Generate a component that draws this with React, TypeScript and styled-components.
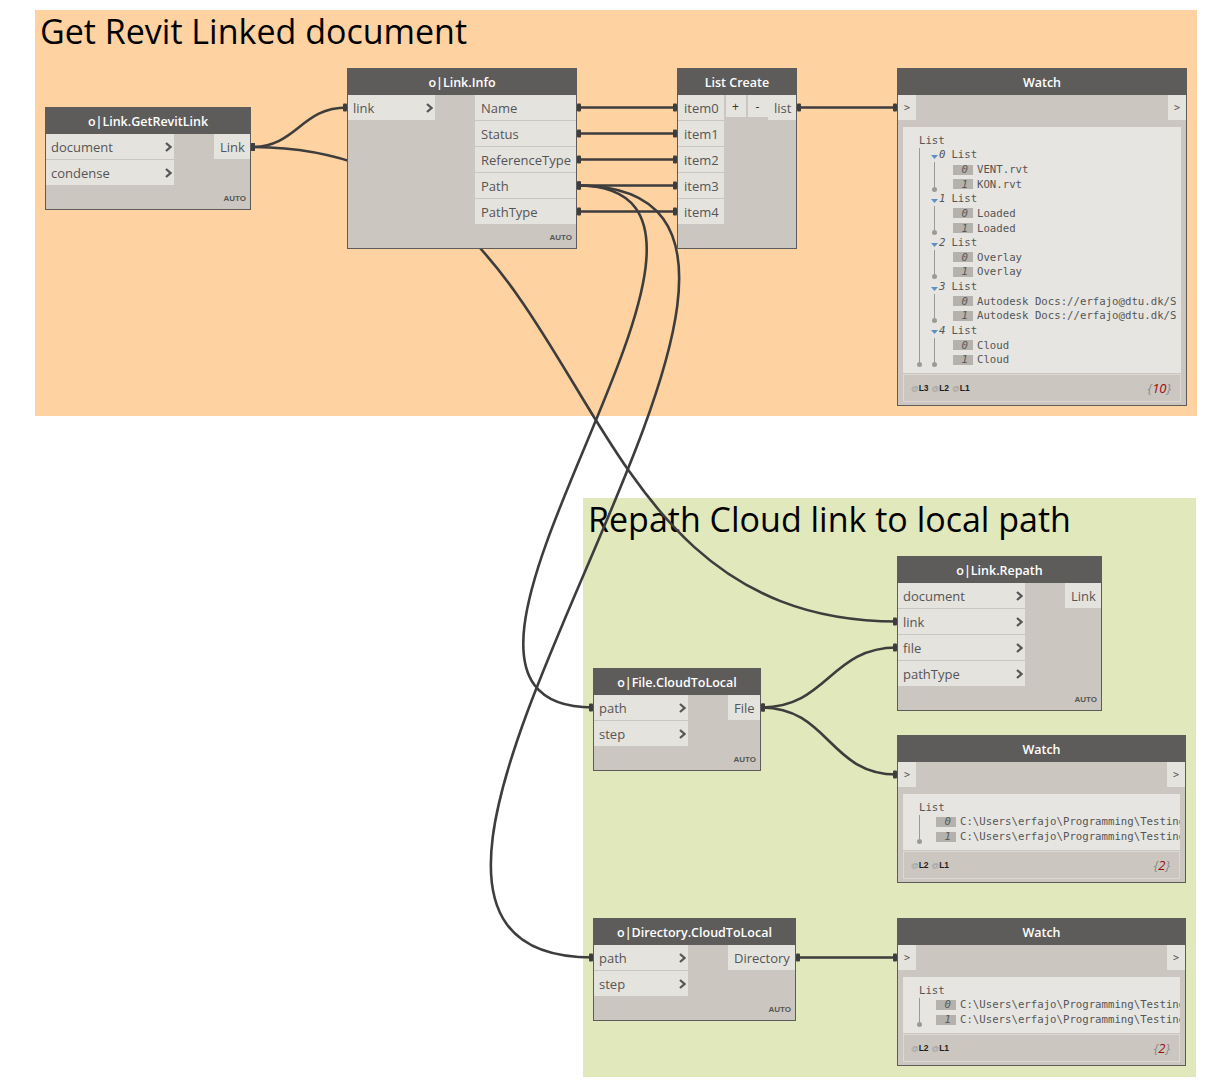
import React from "react";
import styled, { createGlobalStyle } from "styled-components";

const GlobalStyle = createGlobalStyle`
  html, body { margin: 0; padding: 0; background: #ffffff; }
  body { font-family: "Open Sans", "Noto Sans", sans-serif; }
  * { box-sizing: border-box; }
`;

const Canvas = styled.div`
  position: relative;
  width: 1226px;
  height: 1091px;
  overflow: hidden;
  background: #ffffff;
`;

const Group = styled.div<{ $x: number; $y: number; $w: number; $h: number; $bg: string }>`
  position: absolute;
  left: ${p => p.$x}px;
  top: ${p => p.$y}px;
  width: ${p => p.$w}px;
  height: ${p => p.$h}px;
  background: ${p => p.$bg};
  padding: 0 0 0 5px;
  z-index: 0;
`;

const GroupTitle = styled.div`
  font-family: "Open Sans", "Noto Sans", sans-serif;
  font-size: 34px;
  line-height: 42px;
  color: #000;
  white-space: nowrap;
`;

const Wires = styled.svg`
  position: absolute;
  left: 0;
  top: 0;
  z-index: 1;
  pointer-events: none;
`;

const NodeBox = styled.div<{ $x: number; $y: number; $w: number }>`
  position: absolute;
  left: ${p => p.$x}px;
  top: ${p => p.$y}px;
  width: ${p => p.$w}px;
  z-index: 2;
  display: flex;
  flex-direction: column;
  background: #cbc7c0;
  border: 1px solid #5e5c5a;
`;

const NodeHeader = styled.div`
  height: 26px;
  background: #5e5c5a;
  color: #ffffff;
  font-family: "Open Sans", sans-serif;
  font-weight: 600;
  font-size: 12.5px;
  display: flex;
  align-items: center;
  justify-content: center;
  white-space: nowrap;
`;

const NodeBody = styled.div`
  display: flex;
  justify-content: space-between;
  align-items: flex-start;
`;

const PortColumn = styled.div<{ $w: number }>`
  width: ${p => p.$w}px;
  display: flex;
  flex-direction: column;
  gap: 1px;
`;

const InPort = styled.div`
  height: 25px;
  background: #e5e3de;
  display: flex;
  align-items: center;
  justify-content: space-between;
  padding: 0 2px 0 5px;
  font-size: 13px;
  color: #555;
  white-space: nowrap;
`;

const OutPort = styled.div`
  height: 25px;
  background: #e5e3de;
  display: flex;
  align-items: center;
  padding: 0 5px 0 6px;
  font-size: 13px;
  color: #555;
  white-space: nowrap;
`;

const NodeFooter = styled.div`
  height: 24px;
  display: flex;
  justify-content: flex-end;
  align-items: flex-end;
  padding: 0 4px 5px 0;
  font-family: "Liberation Sans", Arial, sans-serif;
  font-weight: 700;
  font-size: 8px;
  line-height: 10px;
  color: #555;
`;

const ListButtons = styled.div`
  display: flex;
  gap: 2px;
  margin-left: 1px;
`;

const ListButton = styled.div`
  width: 20px;
  height: 22px;
  background: #e5e3de;
  display: flex;
  align-items: center;
  justify-content: center;
  font-size: 12px;
  color: #333;
`;

const WatchPorts = styled.div`
  display: flex;
  justify-content: space-between;
`;

const WatchPort = styled.div`
  width: 18px;
  height: 25px;
  background: #e5e3de;
  display: flex;
  align-items: center;
  justify-content: center;
  font-family: "DejaVu Sans Mono", monospace;
  font-size: 10px;
  color: #555;
`;

const WatchPanel = styled.div<{ $h: number }>`
  height: ${p => p.$h}px;
  margin: 7px 5px 0;
  background: #e6e5e1;
  overflow: hidden;
  padding: 6px 0 0 13px;
  font-family: "DejaVu Sans Mono", "Liberation Mono", monospace;
  font-size: 10.7px;
  color: #555;
`;

const WatchFooter = styled.div`
  height: 28px;
  margin: 1px 5px 3px;
  border: 1px solid #dcd9d3;
  display: flex;
  align-items: center;
  justify-content: space-between;
  padding: 0 7px 0 7px;
`;

const Levels = styled.div`
  display: flex;
  gap: 3px;
  font-family: "Liberation Sans", Arial, sans-serif;
  font-size: 8.5px;
  font-weight: 700;
  color: #1e1e1e;
`;

const At = styled.span`
  color: #9d9b97;
  font-weight: 400;
  font-size: 7.5px;
`;

const Count = styled.div`
  font-family: "Open Sans", sans-serif;
  font-style: italic;
  font-size: 13px;
  color: #8a8a8a;
  margin-right: 2px;
`;

const CountNum = styled.span`
  color: #9b0b0b;
`;

const TreeLine = styled.div`
  height: 14.64px;
  display: flex;
  align-items: center;
  white-space: nowrap;
`;

const RootLabel = styled.span`
  margin-left: 3px;
`;

const Branch = styled.div`
  display: flex;
`;

const Rail = styled.div`
  width: 7px;
  flex-shrink: 0;
  display: flex;
  flex-direction: column;
  align-items: center;
  &::before {
    content: "";
    flex: 1;
    width: 1px;
    background: #9c9a96;
  }
  &::after {
    content: "";
    width: 5px;
    height: 5px;
    border-radius: 50%;
    background: #9c9a96;
  }
`;

const BranchItems = styled.div<{ $indent: number }>`
  margin-left: ${p => p.$indent}px;
  display: flex;
  flex-direction: column;
`;

const Badge = styled.span`
  width: 20px;
  height: 10px;
  background: #b5b2ad;
  color: #5a5a5a;
  font-style: italic;
  display: flex;
  align-items: center;
  justify-content: flex-end;
  padding-right: 5px;
  margin-right: 4px;
  flex-shrink: 0;
`;

const Index = styled.span`
  font-style: italic;
  margin: 0 6px 0 1px;
`;

const Chevron = () => (
  <svg width="7" height="10" viewBox="0 0 7 10">
    <polyline points="1,1 5.5,5 1,9" fill="none" stroke="#555" strokeWidth="2.2" />
  </svg>
);

const Caret = () => (
  <svg width="7" height="8" viewBox="0 0 7 8" style={{ marginTop: 4 }}>
    <polygon points="0,2 7,2 3.5,6" fill="#5d8fc4" />
  </svg>
);

type FnProps = {
  name: string;
  x: number;
  y: number;
  w: number;
  inputs: string[];
  inW: number;
  outputs: string[];
  outW: number;
};

const FunctionNode = ({ name, x, y, w, inputs, inW, outputs, outW }: FnProps) => (
  <NodeBox $x={x} $y={y} $w={w}>
    <NodeHeader>{name}</NodeHeader>
    <NodeBody>
      <PortColumn $w={inW}>
        {inputs.map(i => (
          <InPort key={i}>
            {i}
            <Chevron />
          </InPort>
        ))}
      </PortColumn>
      <PortColumn $w={outW}>
        {outputs.map(o => (
          <OutPort key={o}>{o}</OutPort>
        ))}
      </PortColumn>
    </NodeBody>
    <NodeFooter>AUTO</NodeFooter>
  </NodeBox>
);

type WatchProps = {
  x: number;
  y: number;
  w: number;
  panelH: number;
  levels: string[];
  count: number;
  children: React.ReactNode;
};

const WatchNode = ({ x, y, w, panelH, levels, count, children }: WatchProps) => (
  <NodeBox $x={x} $y={y} $w={w}>
    <NodeHeader>Watch</NodeHeader>
    <WatchPorts>
      <WatchPort>&gt;</WatchPort>
      <WatchPort>&gt;</WatchPort>
    </WatchPorts>
    <WatchPanel $h={panelH}>{children}</WatchPanel>
    <WatchFooter>
      <Levels>
        {levels.map(l => (
          <span key={l}>
            <At>@</At>
            {l}
          </span>
        ))}
      </Levels>
      <Count>
        {"{"}
        <CountNum>{count}</CountNum>
        {"}"}
      </Count>
    </WatchFooter>
  </NodeBox>
);

const Items = ({ values }: { values: string[] }) => (
  <>
    {values.map((v, i) => (
      <TreeLine key={i}>
        <Badge>{i}</Badge>
        {v}
      </TreeLine>
    ))}
  </>
);

const linkInfo = [
  ["VENT.rvt", "KON.rvt"],
  ["Loaded", "Loaded"],
  ["Overlay", "Overlay"],
  ["Autodesk Docs://erfajo@dtu.dk/S", "Autodesk Docs://erfajo@dtu.dk/S"],
  ["Cloud", "Cloud"],
];

const localPaths = [
  "C:\\Users\\erfajo\\Programming\\Testing",
  "C:\\Users\\erfajo\\Programming\\Testing",
];

const wire = (x1: number, y1: number, x2: number, y2: number) => {
  const d = Math.hypot(x2 - x1, y2 - y1) * 0.45;
  return `M${x1},${y1} C${x1 + d},${y1} ${x2 - d},${y2} ${x2},${y2}`;
};

const connections: [number, number, number, number][] = [
  [251, 147, 347, 107.5],
  [251, 147, 897, 621.5],
  [577, 107.5, 677, 107.5],
  [577, 133.5, 677, 133.5],
  [577, 159.5, 677, 159.5],
  [577, 185.5, 677, 185.5],
  [577, 211.5, 677, 211.5],
  [577, 185.5, 593, 707.5],
  [577, 185.5, 593, 957.5],
  [797, 107.5, 897, 107.5],
  [761, 707.5, 897, 647.5],
  [761, 707.5, 897, 774.5],
  [796, 957.5, 897, 957.5],
];

export default function App() {
  return (
    <>
      <GlobalStyle />
      <Canvas>
        <Group $x={35} $y={10} $w={1162} $h={406} $bg="#fed3a1">
          <GroupTitle>Get Revit Linked document</GroupTitle>
        </Group>
        <Group $x={583} $y={498} $w={613} $h={579} $bg="#e1e8bb">
          <GroupTitle>Repath Cloud link to local path</GroupTitle>
        </Group>

        <Wires width={1226} height={1091}>
          {connections.map(([x1, y1, x2, y2], i) => (
            <g key={i}>
              <path d={wire(x1, y1, x2, y2)} fill="none" stroke="#3d3d3d" strokeWidth={2.6} />
              <rect x={x1} y={y1 - 4} width={4} height={8} rx={1} fill="#3d3d3d" />
              <rect x={x2 - 4} y={y2 - 4} width={4} height={8} rx={1} fill="#3d3d3d" />
            </g>
          ))}
        </Wires>

        <FunctionNode
          name="o|Link.GetRevitLink"
          x={45}
          y={107}
          w={206}
          inputs={["document", "condense"]}
          inW={128}
          outputs={["Link"]}
          outW={36}
        />
        <FunctionNode
          name="o|Link.Info"
          x={347}
          y={68}
          w={230}
          inputs={["link"]}
          inW={87}
          outputs={["Name", "Status", "ReferenceType", "Path", "PathType"]}
          outW={101}
        />

        <NodeBox $x={677} $y={68} $w={120}>
          <NodeHeader>List Create</NodeHeader>
          <NodeBody>
            <PortColumn $w={46}>
              {["item0", "item1", "item2", "item3", "item4"].map(i => (
                <OutPort key={i}>{i}</OutPort>
              ))}
            </PortColumn>
            <ListButtons>
              <ListButton>+</ListButton>
              <ListButton>-</ListButton>
            </ListButtons>
            <PortColumn $w={28}>
              <OutPort>list</OutPort>
            </PortColumn>
          </NodeBody>
          <NodeFooter />
        </NodeBox>

        <WatchNode x={897} y={68} w={290} panelH={246} levels={["L3", "L2", "L1"]} count={10}>
          <TreeLine>
            <RootLabel>List</RootLabel>
          </TreeLine>
          <Branch>
            <Rail />
            <BranchItems $indent={8}>
              {linkInfo.map((values, i) => (
                <div key={i}>
                  <TreeLine>
                    <Caret />
                    <Index>{i}</Index>List
                  </TreeLine>
                  <Branch>
                    <Rail />
                    <BranchItems $indent={15}>
                      <Items values={values} />
                    </BranchItems>
                  </Branch>
                </div>
              ))}
            </BranchItems>
          </Branch>
        </WatchNode>

        <FunctionNode
          name="o|Link.Repath"
          x={897}
          y={556}
          w={205}
          inputs={["document", "link", "file", "pathType"]}
          inW={127}
          outputs={["Link"]}
          outW={36}
        />
        <FunctionNode
          name="o|File.CloudToLocal"
          x={593}
          y={668}
          w={168}
          inputs={["path", "step"]}
          inW={94}
          outputs={["File"]}
          outW={32}
        />
        <FunctionNode
          name="o|Directory.CloudToLocal"
          x={593}
          y={918}
          w={203}
          inputs={["path", "step"]}
          inW={94}
          outputs={["Directory"]}
          outW={67}
        />

        <WatchNode x={897} y={735} w={289} panelH={56} levels={["L2", "L1"]} count={2}>
          <TreeLine>
            <RootLabel>List</RootLabel>
          </TreeLine>
          <Branch>
            <Rail />
            <BranchItems $indent={13}>
              <Items values={localPaths} />
            </BranchItems>
          </Branch>
        </WatchNode>

        <WatchNode x={897} y={918} w={289} panelH={56} levels={["L2", "L1"]} count={2}>
          <TreeLine>
            <RootLabel>List</RootLabel>
          </TreeLine>
          <Branch>
            <Rail />
            <BranchItems $indent={13}>
              <Items values={localPaths} />
            </BranchItems>
          </Branch>
        </WatchNode>
      </Canvas>
    </>
  );
}
